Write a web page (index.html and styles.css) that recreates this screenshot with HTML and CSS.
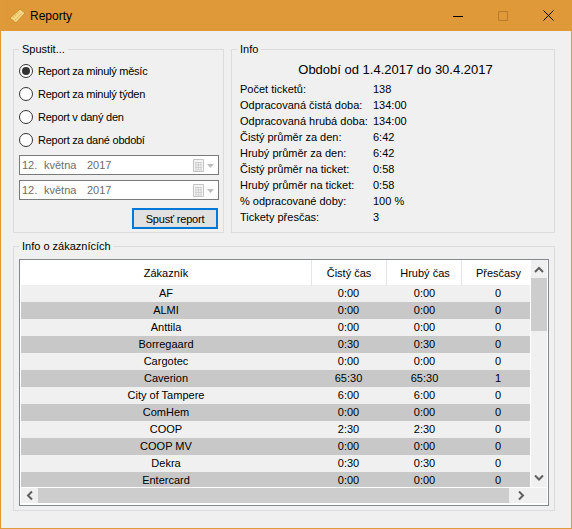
FILE: index.html
```html
<!DOCTYPE html>
<html lang="cs">
<head>
<meta charset="utf-8">
<title>Reporty</title>
<link rel="stylesheet" href="styles.css">
</head>
<body>
<div class="window">
  <header class="titlebar">
    <svg class="app-icon" width="17" height="17" viewBox="0 0 17 17"><path d="M1 11 11 2l5 4-9 10z" fill="#f3d684" stroke="#c98f2a"/><path d="M4 10.500 10.500 4.500M6 13l6.500-6" stroke="#e0a93c" stroke-dasharray="1.500 1"/></svg>
    <span class="title">Reporty</span>
    <div class="controls">
      <svg width="10" height="10" viewBox="0 0 10 10"><path d="M0 5.500h10" stroke="#000"/></svg>
      <svg width="10" height="10" viewBox="0 0 10 10"><path d="M.5.500h9v9h-9z" fill="none" stroke="#b87c2c"/></svg>
      <svg width="11" height="11" viewBox="0 0 11 11"><path d="M.5.500l10 10M10.500.500l-10 10" stroke="#000"/></svg>
    </div>
  </header>
  <main class="content">
    <div class="top-row">
      <section class="group group-run">
        <span class="legend">Spustit...</span>
        <div class="radios">
          <div class="radio-row"><span class="radio checked"></span>Report za minulý měsíc</div>
          <div class="radio-row"><span class="radio"></span>Report za minulý týden</div>
          <div class="radio-row"><span class="radio"></span>Report v daný den</div>
          <div class="radio-row"><span class="radio"></span>Report za dané období</div>
        </div>
        <div class="date"><span class="d1">12.</span><span class="d2">května</span><span>2017</span>
          <svg class="cal" width="20" height="13" viewBox="0 0 20 13"><path d="M.5.500h10v12h-10z" fill="#f4f4f4" stroke="#c4c4c4"/><path d="M2 3.500h7M2 6h7M2 8.500h7M2 11h7M3 3v8M5.500 3v8M8 3v8" stroke="#cfcfcf"/><path d="M14 5h7l-3.500 4z" fill="#bdbdbd"/></svg>
        </div>
        <div class="date"><span class="d1">12.</span><span class="d2">května</span><span>2017</span>
          <svg class="cal" width="20" height="13" viewBox="0 0 20 13"><path d="M.5.500h10v12h-10z" fill="#f4f4f4" stroke="#c4c4c4"/><path d="M2 3.500h7M2 6h7M2 8.500h7M2 11h7M3 3v8M5.500 3v8M8 3v8" stroke="#cfcfcf"/><path d="M14 5h7l-3.500 4z" fill="#bdbdbd"/></svg>
        </div>
        <div class="btn-row"><button class="btn">Spusť report</button></div>
      </section>
      <section class="group group-info">
        <span class="legend">Info</span>
        <h1 class="period">Období od 1.4.2017 do 30.4.2017</h1>
        <dl class="stats">
          <dt>Počet ticketů:</dt><dd>138</dd>
          <dt>Odpracovaná čistá doba:</dt><dd>134:00</dd>
          <dt>Odpracovaná hrubá doba:</dt><dd>134:00</dd>
          <dt>Čistý průměr za den:</dt><dd>6:42</dd>
          <dt>Hrubý průměr za den:</dt><dd>6:42</dd>
          <dt>Čistý průměr na ticket:</dt><dd>0:58</dd>
          <dt>Hrubý průměr na ticket:</dt><dd>0:58</dd>
          <dt>% odpracované doby:</dt><dd>100 %</dd>
          <dt>Tickety přesčas:</dt><dd>3</dd>
        </dl>
      </section>
    </div>
    <section class="group group-cust">
      <span class="legend">Info o zákaznících</span>
      <div class="grid-frame">
        <div class="grid-main">
          <div class="table">
            <div class="row head"><span>Zákazník</span><span>Čistý čas</span><span>Hrubý čas</span><span>Přesčasy</span></div>
            <div class="row"><span>AF</span><span>0:00</span><span>0:00</span><span>0</span></div>
            <div class="row alt"><span>ALMI</span><span>0:00</span><span>0:00</span><span>0</span></div>
            <div class="row"><span>Anttila</span><span>0:00</span><span>0:00</span><span>0</span></div>
            <div class="row alt"><span>Borregaard</span><span>0:30</span><span>0:30</span><span>0</span></div>
            <div class="row"><span>Cargotec</span><span>0:00</span><span>0:00</span><span>0</span></div>
            <div class="row alt"><span>Caverion</span><span>65:30</span><span>65:30</span><span>1</span></div>
            <div class="row"><span>City of Tampere</span><span>6:00</span><span>6:00</span><span>0</span></div>
            <div class="row alt"><span>ComHem</span><span>0:00</span><span>0:00</span><span>0</span></div>
            <div class="row"><span>COOP</span><span>2:30</span><span>2:30</span><span>0</span></div>
            <div class="row alt"><span>COOP MV</span><span>0:00</span><span>0:00</span><span>0</span></div>
            <div class="row"><span>Dekra</span><span>0:30</span><span>0:30</span><span>0</span></div>
            <div class="row alt"><span>Entercard</span><span>0:00</span><span>0:00</span><span>0</span></div>
          </div>
          <div class="vscroll">
            <svg class="arrow" width="16" height="18" viewBox="0 0 16 18"><path d="M4 12l4-4 4 4" fill="none" stroke="#606060" stroke-width="2"/></svg>
            <div class="vthumb"></div>
            <svg class="arrow arrow-end" width="16" height="18" viewBox="0 0 16 18"><path d="M4 6.500l4 4 4-4" fill="none" stroke="#606060" stroke-width="2"/></svg>
          </div>
        </div>
        <div class="hscroll">
          <svg class="arrow" width="17" height="15" viewBox="0 0 17 15"><path d="M11 3.500l-4 4 4 4" fill="none" stroke="#606060" stroke-width="2"/></svg>
          <div class="hthumb"></div>
          <svg class="arrow" width="22" height="15" viewBox="0 0 22 15"><path d="M10 3.500l4 4-4 4" fill="none" stroke="#606060" stroke-width="2"/></svg>
        </div>
      </div>
    </section>
  </main>
</div>
</body>
</html>
```
FILE: styles.css
```css
* { box-sizing: border-box; }
html, body { margin: 0; padding: 0; }
body {
  width: 572px;
  height: 529px;
  font-family: "Liberation Sans", Arial, sans-serif;
  font-size: 11px;
  color: #000;
  overflow: hidden;
}
.window {
  width: 572px;
  height: 529px;
  border: 1px solid #df9a3a;
  border-top: 0;
  background: #f0f0f0;
  display: flex;
  flex-direction: column;
}
.titlebar {
  height: 31px;
  background: #df9938;
  display: flex;
  align-items: center;
  padding-left: 8px;
  flex: none;
}
.app-icon { margin-right: 4px; }
.title { font-size: 12px; }
.controls {
  margin-left: auto;
  display: flex;
  align-items: center;
  padding-right: 17px;
  gap: 35px;
}
.content { padding: 18px 0 0 12px; }
.top-row { display: flex; gap: 7px; }
.group {
  position: relative;
  border: 1px solid #dcdcdc;
}
.legend {
  position: absolute;
  top: -8px;
  left: 5px;
  padding: 0 3px;
  background: #f0f0f0;
  line-height: 14px;
}
.group-run { width: 211px; height: 184px; padding: 9px 5px 0; }
.radio-row {
  height: 23px;
  display: flex;
  align-items: center;
  letter-spacing: -.25px;
}
.radio {
  width: 14px;
  height: 14px;
  border: 1px solid #333;
  border-radius: 50%;
  background: #fff;
  margin-right: 5px;
  flex: none;
  position: relative;
}
.radio.checked::after {
  content: "";
  position: absolute;
  inset: 2px;
  border-radius: 50%;
  background: #333;
}
.radios { margin-bottom: 4px; }
.date {
  width: 200px;
  height: 20px;
  border: 1px solid #7a7a7a;
  background: #fff;
  color: #6d6d6d;
  display: flex;
  align-items: center;
  padding-left: 2px;
  margin-bottom: 5px;
}
.d1 { width: 22px; }
.d2 { width: 43px; }
.cal { margin-left: auto; margin-right: 5px; overflow: visible; }
.btn-row { display: flex; justify-content: flex-end; margin-top: 8px; }
.btn {
  width: 86px;
  height: 21px;
  border: 2px solid #0078d7;
  background: #e1e1e1;
  font: 11px "Liberation Sans", Arial, sans-serif;
  letter-spacing: -.2px;
  padding: 0;
  color: #000;
}
.group-info { width: 324px; height: 184px; padding: 11px 8px 0; }
.period {
  margin: 0;
  font-size: 13px;
  font-weight: 400;
  line-height: 18px;
  text-align: center;
  padding-left: 5px;
}
.stats {
  margin: 2px 0 0;
  display: grid;
  grid-template-columns: 133px 1fr;
  grid-auto-rows: 16px;
  line-height: 16px;
}
.stats dd { margin: 0; }
.group-cust {
  width: 542px;
  height: 265px;
  margin-top: 13px;
  padding: 12px 5px 0;
}
.grid-frame {
  width: 530px;
  height: 247px;
  border: 1px solid #828790;
  background: #fff;
  padding: 0 1px;
  display: flex;
  flex-direction: column;
}
.grid-main { display: flex; height: 228px; }
.table { width: 510px; height: 227px; overflow: hidden; }
.row {
  display: grid;
  grid-template-columns: 290px 75px 75px 70px;
  height: 17px;
  line-height: 17px;
  background: #f0f0f0;
  text-align: center;
}
.row span:nth-child(3) { padding-left: 2px; }
.row span:nth-child(4) { padding-left: 4px; }
.row.alt { background: #c8c8c8; }
.row.head {
  height: 25px;
  line-height: 26px;
  background: #fff;
}
.row.head span + span { border-left: 1px solid #e5e5e5; }
.vscroll {
  width: 16px;
  margin-left: 1px;
  background: #f0f0f0;
  height: 227px;
  display: flex;
  flex-direction: column;
}
.arrow { display: block; flex: none; }
.arrow-end { margin-top: auto; }
.vthumb { height: 53px; background: #cdcdcd; }
.hscroll {
  height: 15px;
  width: 526px;
  background: #f0f0f0;
  display: flex;
}
.hthumb { width: 471px; background: #cdcdcd; }
```
